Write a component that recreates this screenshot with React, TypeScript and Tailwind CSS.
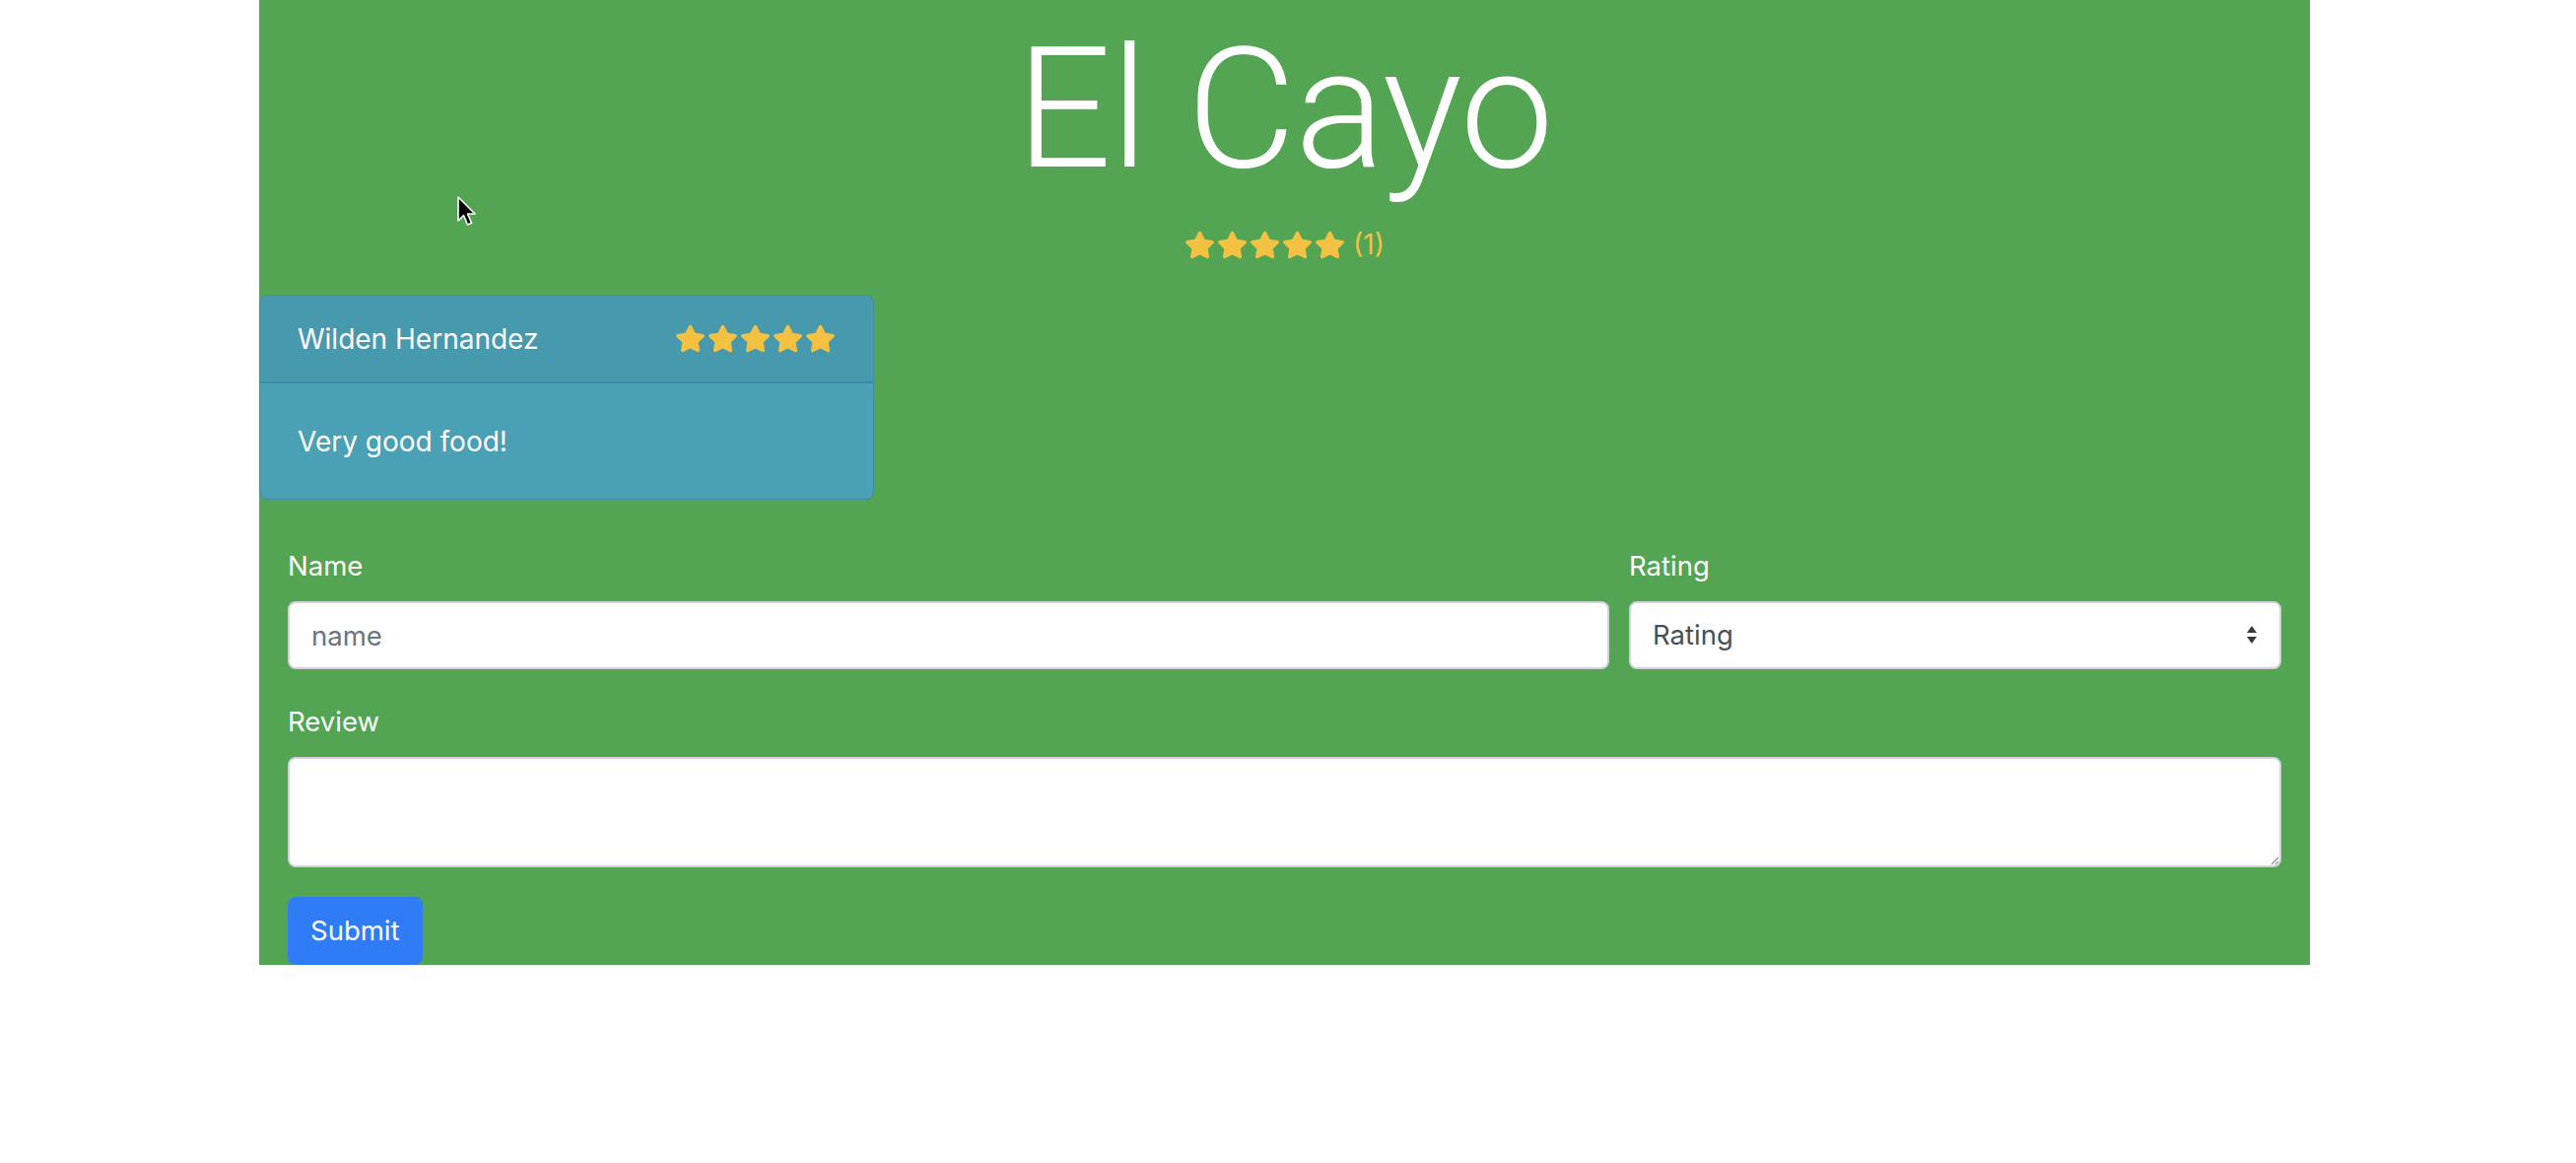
import { useState } from "react"

const STAR =
  "M259.3 17.8L194 150.2 47.9 171.5c-26.2 3.8-36.7 36.1-17.7 54.6l105.7 103-25 145.5c-4.5 26.3 23.2 46 46.4 33.7L288 439.6l130.7 68.7c23.2 12.2 50.9-7.4 46.4-33.7l-25-145.5 105.7-103c19-18.5 8.5-50.8-17.7-54.6L382 150.2 316.7 17.8c-11.7-23.6-45.6-23.9-57.4 0z"

function Stars({ count = 5 }: { count?: number }) {
  return (
    <div className="flex items-center gap-[2px]">
      {Array.from({ length: count }).map((_, i) => (
        <svg key={i} width="31" height="29" viewBox="0 0 576 512" fill="#f4c143">
          <path d={STAR} />
        </svg>
      ))}
    </div>
  )
}

function Cursor() {
  return (
    <svg className="absolute left-[200px] top-[198px]" width="22" height="34" viewBox="0 0 22 34">
      <path
        d="M2 2 L2 26 L7.5 20.5 L11.5 30 L15.5 28.3 L11.5 19 L19 19 Z"
        fill="#000"
        stroke="#fff"
        strokeWidth="1.6"
        strokeLinejoin="round"
      />
    </svg>
  )
}

function App() {
  const [name, setName] = useState("")
  const [rating, setRating] = useState("")
  const [review, setReview] = useState("")

  return (
    <div className="min-h-screen w-full bg-white font-['Inter',sans-serif]">
      <div className="relative ml-[263px] w-[2081px] bg-[#53a553] text-white">
        <Cursor />
        <h1 className="pt-[8px] text-center font-['Roboto',sans-serif] text-[170px] font-light leading-[206px] tracking-[-1px] text-white">
          El Cayo
        </h1>
        <div className="mt-[19px] flex items-center justify-center gap-[8px]">
          <Stars />
          <span className="text-[28px] leading-[30px] text-[#f4c143]">(1)</span>
        </div>

        {/* review card */}
        <div className="mt-[36px] w-[624px] overflow-hidden rounded-[8px] border border-[#3f8ea3] bg-[#4aa0b4]">
          <div className="flex h-[89px] items-center justify-between border-b-2 border-[#3f8ca1] bg-[#4799ae] pl-[38px] pr-[38px]">
            <p className="text-[28px] text-white">Wilden Hernandez</p>
            <Stars />
          </div>
          <div className="flex h-[117px] items-center pl-[38px]">
            <p className="text-[28px] text-white">Very good food!</p>
          </div>
        </div>

        {/* form */}
        <form className="mt-[48px] px-[29px]" onSubmit={(e) => e.preventDefault()}>
          <div className="grid grid-cols-[1341px_662px] gap-x-[20px]">
            <div>
              <label className="mb-[16px] block text-[27.5px] leading-[39px]">Name</label>
              <input
                value={name}
                onChange={(e) => setName(e.target.value)}
                placeholder="name"
                className="block h-[69px] w-full rounded-[8px] border-2 border-[#ced4da] bg-white px-[22px] text-[27.5px] text-[#495057] outline-none placeholder:text-[#6c757d]"
              />
            </div>
            <div>
              <label className="mb-[16px] block text-[27.5px] leading-[39px]">Rating</label>
              <div className="relative">
                <select
                  value={rating}
                  onChange={(e) => setRating(e.target.value)}
                  className="block h-[69px] w-full appearance-none rounded-[8px] border-2 border-[#ced4da] bg-white px-[22px] text-[27.5px] text-[#495057] outline-none"
                >
                  <option value="">Rating</option>
                  <option value="1">1</option>
                  <option value="2">2</option>
                  <option value="3">3</option>
                  <option value="4">4</option>
                  <option value="5">5</option>
                </select>
                <svg className="pointer-events-none absolute right-[24px] top-[24px]" width="12" height="20" viewBox="0 0 12 20" fill="#343a40">
                  <path d="M6 1 L11 8 L1 8 Z" />
                  <path d="M1 12 L11 12 L6 19 Z" />
                </svg>
              </div>
            </div>
          </div>

          <div className="mt-[34px]">
            <label className="mb-[16px] block text-[27.5px] leading-[39px]">Review</label>
            <textarea
              value={review}
              onChange={(e) => setReview(e.target.value)}
              className="block h-[112px] w-full rounded-[8px] border-2 border-[#ced4da] bg-white px-[22px] py-[10px] text-[27.5px] text-[#495057] outline-none"
            />
          </div>

          <button
            type="submit"
            className="mt-[30px] block h-[69px] rounded-[8px] bg-[#2f7cf6] px-[23px] text-[27.5px] text-white"
          >
            Submit
          </button>
        </form>
      </div>
    </div>
  )
}

export default App
